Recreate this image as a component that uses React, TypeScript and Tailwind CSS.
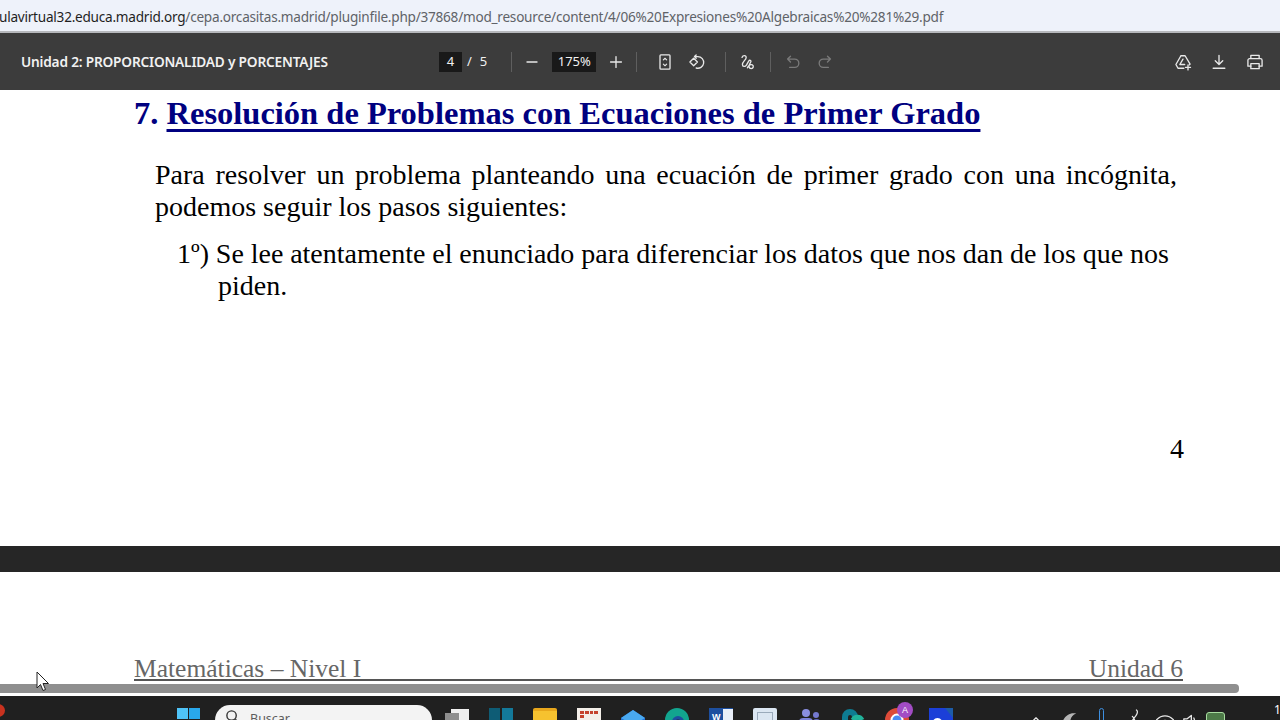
import React from "react";

const ui = "font-['Noto_Sans','Open_Sans',sans-serif]";
const S = { fill: "none", stroke: "currentColor", strokeWidth: 1.6, strokeLinecap: "round" as const, strokeLinejoin: "round" as const };

function Tool({ children, className = "text-[#e8e8e8]" }: { children: React.ReactNode; className?: string }) {
  return (
    <svg viewBox="0 0 24 24" {...S} className={"w-[20px] h-[20px] block shrink-0 " + className}>
      {children}
    </svg>
  );
}

function Sep({ className }: { className: string }) {
  return <div className={"w-px h-[20px] bg-[#5f5f5f] shrink-0 " + className} />;
}

function Toolbar() {
  return (
    <div className="h-[57px] shrink-0 bg-[#3c3c3c] flex items-center pt-[1px] text-[#f1f1f1]">
      <div className={"w-[439px] pl-[21px] pt-[1px] text-[13.7px] font-semibold tracking-[-0.2px] whitespace-nowrap " + ui}>
        Unidad 2: PROPORCIONALIDAD y PORCENTAJES
      </div>
      <div className={"w-[23px] h-[20px] bg-[#191919] flex items-center justify-center text-[13px] " + ui}>4</div>
      <span className={"ml-[5px] text-[13px] " + ui}>/</span>
      <span className={"ml-[8px] text-[13px] " + ui}>5</span>
      <Sep className="ml-[24px]" />
      <div className="ml-[10px]"><Tool><path d="M6 12h12" /></Tool></div>
      <div className={"ml-[10px] w-[44px] h-[20px] bg-[#191919] flex items-center justify-center text-[13px] " + ui}>175%</div>
      <div className="ml-[10px]"><Tool><path d="M5.5 12h13M12 5.5v13" /></Tool></div>
      <Sep className="ml-[10px]" />
      <div className="ml-[18px]">
        <Tool>
          <rect x="6" y="3.5" width="12" height="17" rx="1" />
          <path d="M10 9.5l2-2 2 2M10 14.5l2 2 2-2" strokeWidth="1.3" />
        </Tool>
      </div>
      <div className="ml-[12px]">
        <Tool>
          <path d="M8 7.5l4.5 4.5L8 16.5 3.5 12z" />
          <path d="M11 3.5l-2 2 2 2M9.5 5.5H13a7 7 0 1 1-2 13.7" />
        </Tool>
      </div>
      <Sep className="ml-[18px]" />
      <div className="ml-[11px]">
        <Tool>
          <path d="M6 6.500C7 3.500 11 3.500 11 6.500 11 9.500 6.500 11.500 6.500 15 6.500 18 10 18 11.500 15.500L14 11C15 9 17.500 10 16.500 12 15.500 14 14 15.500 14.500 18 15 20.500 19 20.500 19.500 18 20 15.500 17.500 14.500 15.500 15.500 14 16.300 13 17.500 12.500 19" />
        </Tool>
      </div>
      <Sep className="ml-[13px]" />
      <div className="ml-[12px]">
        <Tool className="text-[#7a7a7a]"><path d="M9 5L5.500 8.500 9 12M5.500 8.500H14a5 5 0 0 1 0 10H8" /></Tool>
      </div>
      <div className="ml-[12px]">
        <Tool className="text-[#7a7a7a]"><path d="M15 5l3.500 3.500L15 12M18.500 8.500H10a5 5 0 0 0 0 10h6" /></Tool>
      </div>
      <div className="ml-auto flex items-center gap-[16px] pr-[15px]">
        <Tool>
          <path d="M9.500 4.500h5l6 10-1 1M9.500 4.500L3.500 15l2.500 4.500H13" />
          <path d="M12 8.500l-3.800 6.500h5.800" />
          <path d="M18 15.500v6M15 18.500h6" />
        </Tool>
        <Tool>
          <path d="M12 4v10.500M7.500 10.500l4.500 4.500 4.500-4.500M5 19.500h14" />
        </Tool>
        <Tool>
          <path d="M7 8V4h10v4M7 17H3.500v-7a2 2 0 0 1 2-2h13a2 2 0 0 1 2 2v7H17" />
          <path d="M7 14h10v6H7z" />
        </Tool>
      </div>
    </div>
  );
}

function TaskIcons() {
  return (
    <div className="flex items-start gap-[20px] ml-[13px]">
      <div className="w-[24px] h-[24px] mt-[13px] relative">
        <div className="absolute right-0 top-0 w-[18px] h-[24px] bg-[#efefef]" />
        <div className="absolute left-0 top-[4px] w-[14px] h-[20px] bg-[#8e8e8e]" />
      </div>
      <div className="w-[24px] h-[24px] mt-[12px] flex gap-[2px]">
        <div className="w-[11px] bg-[#0e5c75]" />
        <div className="w-[11px] bg-[#13799a]" />
      </div>
      <div className="w-[24px] h-[24px] mt-[12px] bg-[#f6c22f] rounded-t-[2px] border-t-[3px] border-[#e8a71c]" />
      <div className="w-[24px] h-[24px] mt-[12px] bg-[#f4efe9] grid grid-cols-4 gap-[1px] p-[3px] content-start">
        <div className="h-[3px] bg-[#c5432d]" /><div className="h-[3px] bg-[#c5432d]" /><div className="h-[3px] bg-[#c5432d]" /><div className="h-[3px] bg-[#c5432d]" />
        <div className="h-[3px] bg-[#c5432d]" />
      </div>
      <svg viewBox="0 0 24 24" className="w-[24px] h-[24px] mt-[13px]"><path d="M12 1L24 9v15H0V9z" fill="#1f6fd6" /><path d="M12 1L24 9 12 16 0 9z" fill="#49a9f0" /></svg>
      <svg viewBox="0 0 24 24" className="w-[24px] h-[24px] mt-[12px]"><circle cx="12" cy="12" r="12" fill="#12a58f" /><circle cx="13" cy="14" r="6" fill="#1d4fa0" /><circle cx="13" cy="15" r="3.500" fill="#202020" /></svg>
      <div className="w-[24px] h-[24px] mt-[12px] bg-[#1d4f9f] relative overflow-hidden">
        <span className="absolute left-[3px] top-[3px] text-[9px] leading-[12px] text-white font-bold font-['Liberation_Sans',sans-serif]">W</span>
        <div className="absolute right-0 top-[1px] w-[10px] h-[14px] bg-[#e9eff8]" />
      </div>
      <div className="w-[24px] h-[24px] mt-[12px] bg-[#dbe6f2] rounded-t-[2px] p-[4px]">
        <div className="h-[14px] border border-[#9aaabb]" />
      </div>
      <svg viewBox="0 0 24 24" className="w-[24px] h-[24px] mt-[12px]"><circle cx="9" cy="5" r="4" fill="#8a8ee0" /><circle cx="19" cy="7" r="3" fill="#7479d0" /><rect x="2" y="10" width="14" height="14" rx="4" fill="#7d82da" /><rect x="16" y="11" width="7" height="13" rx="3" fill="#5e63b8" /></svg>
      <svg viewBox="0 0 24 24" className="w-[24px] h-[24px] mt-[12px]"><path d="M4 22V9a5 5 0 0 1 10 0v13" fill="none" stroke="#0e7c92" strokeWidth="6" /><path d="M12 12a5 5 0 0 1 9 0" fill="none" stroke="#21b39b" strokeWidth="5" /></svg>
      <div className="w-[24px] h-[24px] mt-[12px] relative">
        <svg viewBox="0 0 24 24" className="w-[24px] h-[24px]"><circle cx="12" cy="12" r="12" fill="#dd4b39" /><path d="M12 12 L24 12 A12 12 0 0 1 12 24z" fill="#f4c20d" /><circle cx="12" cy="12" r="5.500" fill="#4a8af4" stroke="#fff" strokeWidth="2" /></svg>
        <div className="absolute -top-[6px] left-[12px] w-[16px] h-[16px] rounded-full bg-[#a24cc4] text-white text-[9px] leading-[16px] text-center font-['Liberation_Sans',sans-serif]">A</div>
      </div>
      <svg viewBox="0 0 24 24" className="w-[24px] h-[24px] mt-[12px]"><rect width="24" height="24" fill="#1b3fd8" /><path d="M16 0h8v10z" fill="#1d5ca8" /><path d="M5 13a4 4 0 0 1 7 0" fill="none" stroke="#fff" strokeWidth="2" /></svg>
    </div>
  );
}

function Tray() {
  return (
    <div className="ml-auto flex items-start text-[#e8e8e8]">
      <svg viewBox="0 0 12 8" {...S} className="w-[10px] h-[7px] mt-[20px]"><path d="M1 7l5-5 5 5" /></svg>
      <svg viewBox="0 0 20 20" className="w-[18px] h-[18px] ml-[19px] mt-[14px]"><path d="M2 16C4 6 12 2 18 4c-5 2-7 6-7 12z" fill="#b5b5b5" /></svg>
      <div className="w-[5px] h-[14px] ml-[21px] mt-[12px] rounded-t-[3px] border border-[#3d8fe0]" />
      <svg viewBox="0 0 20 24" {...S} className="w-[16px] h-[20px] ml-[22px] mt-[12px]"><path d="M13 2c3 2 0 7-3 10l-5 8M8 10c2 2 4 5 3 10" /></svg>
      <svg viewBox="0 0 24 18" {...S} className="w-[20px] h-[15px] ml-[13px] mt-[17px]"><path d="M2 8c6-6 14-6 20 0M6 12c4-4 8-4 12 0" /></svg>
      <svg viewBox="0 0 20 18" {...S} className="w-[17px] h-[15px] ml-[7px] mt-[17px]"><path d="M2 7h4l5-4v12l-5-4H2zM14 6c1 2 1 4 0 6" /></svg>
      <div className="w-[19px] h-[16px] ml-[7px] mt-[16px] rounded-t-[3px] border border-[#a8dca0] bg-[#4d7a48]" />
      <span className="ml-[49px] mr-[-4px] mt-[6px] text-[12px] leading-[16px] text-white font-['Noto_Sans',sans-serif] w-[10px]">1</span>
    </div>
  );
}

export default function App() {
  return (
    <div className="w-[1280px] h-[720px] flex flex-col overflow-hidden relative bg-white">
      <div className="h-[31px] shrink-0 bg-[#eef2fa] flex items-center pt-[3px] overflow-hidden">
        <div className={"-ml-[1px] text-[13.6px] tracking-[-0.24px] whitespace-nowrap text-[#5f6368] " + ui}>
          <span className="text-[#1f1f1f]">ulavirtual32.educa.madrid.org</span>/cepa.orcasitas.madrid/pluginfile.php/37868/mod_resource/content/4/06%20Expresiones%20Algebraicas%20%281%29.pdf
        </div>
      </div>
      <div className="h-[2px] shrink-0 bg-[#b6b8bc]" />
      <Toolbar />

      <div className="h-[456px] shrink-0 bg-white pl-[134px] pr-[96px] text-black font-['Liberation_Serif',serif] relative">
        <h1 className="text-[32.5px] leading-[46px] font-bold text-[#000080] whitespace-nowrap">
          7. <span className="underline decoration-[3px] underline-offset-[5px]">Resolución de Problemas con Ecuaciones de Primer Grado</span>
        </h1>
        <p className="mt-[23px] ml-[21px] mr-[7px] text-[28px] leading-[32px] text-justify">
          Para resolver un problema planteando una ecuación de primer grado con una incógnita, podemos seguir los pasos siguientes:
        </p>
        <p className="mt-[15px] ml-[43px] mr-[15px] pl-[41px] -indent-[41px] text-[28px] leading-[32px] text-justify [word-spacing:-2px]">
          1º) Se lee atentamente el enunciado para diferenciar los datos que nos dan de los que nos piden.
        </p>
        <div className="mt-[131px] text-right text-[28px] leading-[32px]">4</div>
      </div>

      <div className="h-[26px] shrink-0 bg-[#262626]" />

      <div className="flex-1 bg-white pl-[134px] pr-[97px] pt-[86px] font-['Liberation_Serif',serif]">
        <div className="flex justify-between text-[25.5px] leading-[21px] text-[#666666] border-b-2 border-[#555555]">
          <span>Matemáticas – Nivel I</span>
          <span>Unidad 6</span>
        </div>
      </div>

      <div className="h-[24px] shrink-0 bg-[#202020] flex items-start overflow-visible relative">
        <div className="absolute left-[-8px] top-[8px] w-[13px] h-[13px] rounded-full bg-[#c8321f]" />
        <div className="ml-[177px] mt-[12px] w-[23px] h-[23px] grid grid-cols-2 gap-[1px] shrink-0">
          <div className="bg-[#4fc3f7]" /><div className="bg-[#29a8ec]" />
          <div className="bg-[#29a8ec]" /><div className="bg-[#1b8fdc]" />
        </div>
        <div className={"ml-[15px] mt-[9px] w-[217px] h-[30px] rounded-t-[15px] bg-[#f3f3f3] flex items-start pl-[10px] pt-[5px] shrink-0 text-[#5c5c5c] text-[12.5px] " + ui}>
          <svg viewBox="0 0 16 16" fill="none" stroke="#333" strokeWidth="1.5" className="w-[15px] h-[15px] mt-[-1px]"><circle cx="7" cy="7" r="5" /><path d="M11 11l4 4" /></svg>
          <span className="ml-[10px]">Buscar</span>
        </div>
        <TaskIcons />
        <Tray />
      </div>

      <div className="absolute left-0 top-[684px] w-[1280px] h-[12px] bg-white">
        <div className="w-[1239px] h-[9px] bg-[#8f8f8f] rounded-r-[4px]" />
      </div>
      <svg viewBox="0 0 13 20" className="absolute left-[36px] top-[671px] w-[13px] h-[20px]">
        <path d="M1 1v16l3.500-3.500 2.500 6 2.500-1-2.500-6h5.500z" fill="#fff" stroke="#222" strokeWidth="1" strokeLinejoin="round" />
      </svg>
    </div>
  );
}
